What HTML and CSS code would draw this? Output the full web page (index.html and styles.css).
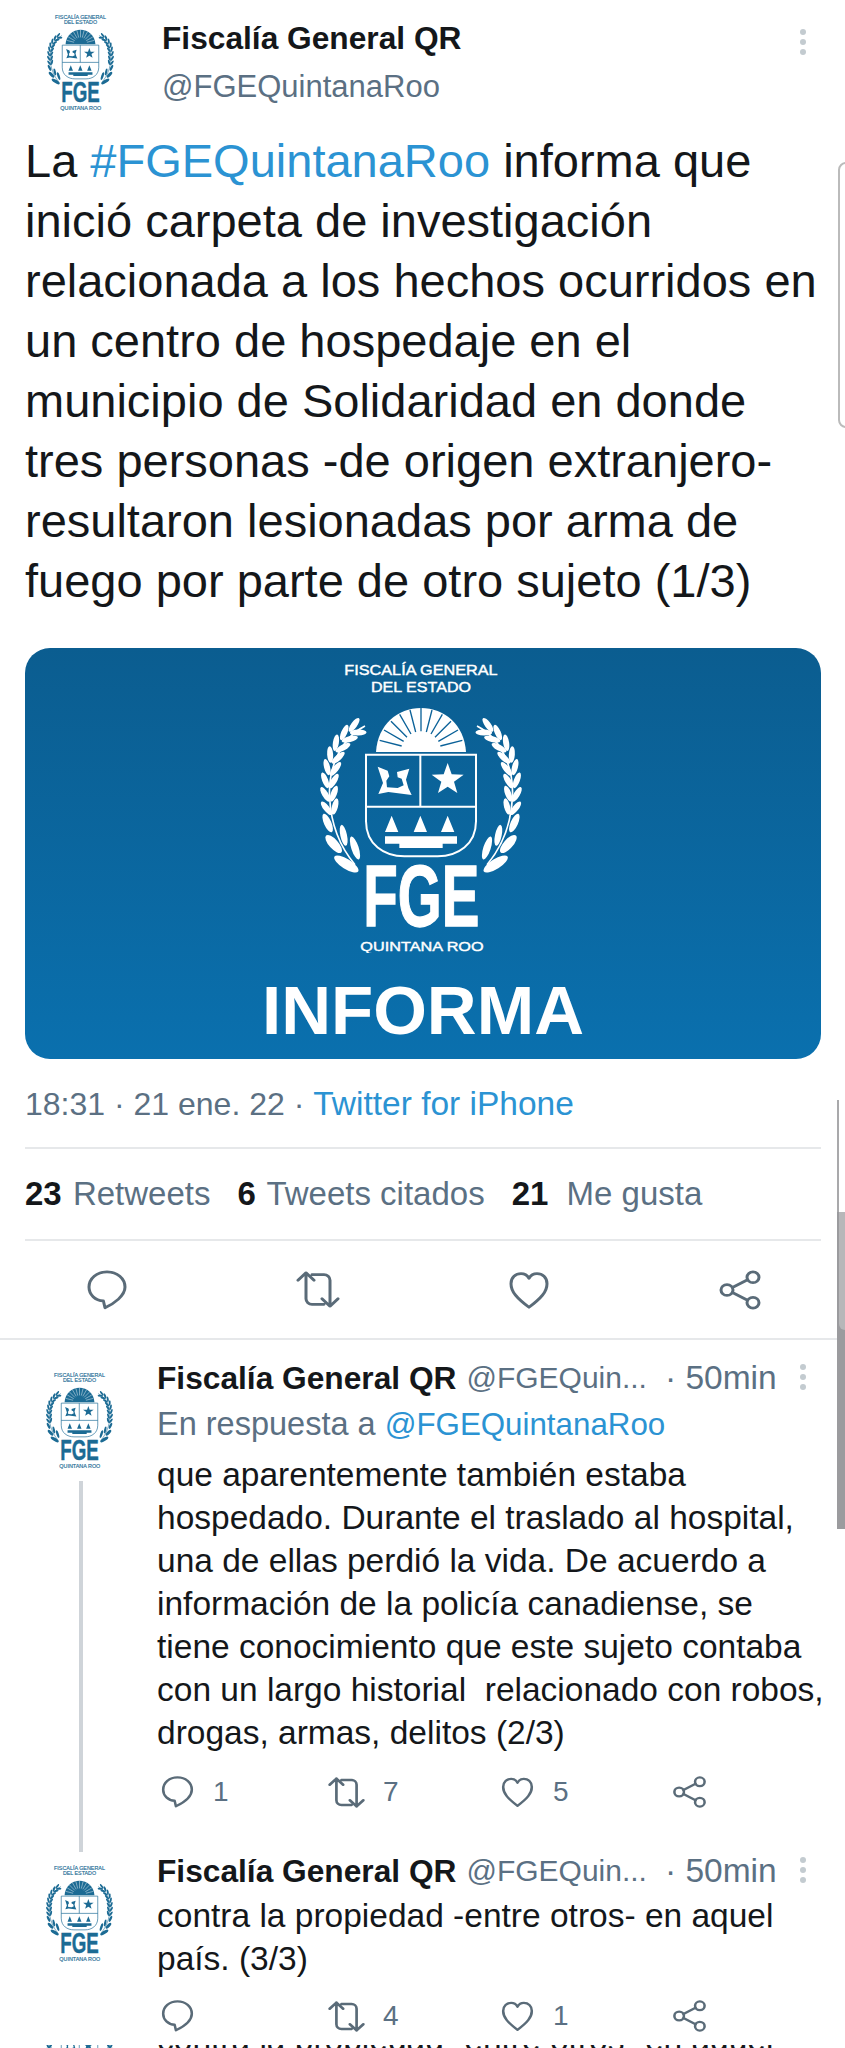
FILE: index.html
```html
<!DOCTYPE html>
<html lang="es">
<head>
<meta charset="UTF-8">
<meta name="viewport" content="width=device-width,initial-scale=1.0">
<title>Fiscalía General QR</title>
<link rel="stylesheet" href="styles.css">
</head>
<body>

<svg class="sprite" xmlns="http://www.w3.org/2000/svg">
  <symbol id="hoja" viewBox="-40 -40 80 80" overflow="visible">
    <ellipse cx="4" cy="-13" rx="25" ry="9" transform="rotate(-26 4 -13)"/>
    <ellipse cx="4" cy="13" rx="25" ry="9" transform="rotate(26 4 13)"/>
  </symbol>
  <g id="rama">
    <path class="tallo" d="M262 234C190 270 150 360 156 450C160 530 190 600 232 650"/>
    <use href="#hoja" x="-40" y="-40" width="80" height="80" transform="translate(232 244) rotate(-28)"/>
    <use href="#hoja" x="-40" y="-40" width="80" height="80" transform="translate(205 266) rotate(-40)"/>
    <use href="#hoja" x="-40" y="-40" width="80" height="80" transform="translate(183 295) rotate(-55)"/>
    <use href="#hoja" x="-40" y="-40" width="80" height="80" transform="translate(168 328) rotate(-68)"/>
    <use href="#hoja" x="-40" y="-40" width="80" height="80" transform="translate(160 364) rotate(-78)"/>
    <use href="#hoja" x="-40" y="-40" width="80" height="80" transform="translate(155 402) rotate(-85)"/>
    <use href="#hoja" x="-40" y="-40" width="80" height="80" transform="translate(156 442) rotate(-95)"/>
    <use href="#hoja" x="-40" y="-40" width="80" height="80" transform="translate(160 482) rotate(-102)"/>
    <ellipse cx="232" cy="600" rx="36" ry="11" transform="rotate(72 232 600)"/>
    <ellipse cx="198" cy="562" rx="32" ry="10" transform="rotate(78 198 562)"/>
    <ellipse cx="168" cy="588" rx="34" ry="14" transform="rotate(48 168 588)"/>
    <ellipse cx="206" cy="648" rx="42" ry="15" transform="rotate(32 206 648)"/>
    <ellipse cx="150" cy="525" rx="30" ry="11" transform="rotate(66 150 525)"/>
  </g>
  <symbol id="logo" viewBox="100 30 660 885">
    <text class="logo-txt" x="430" y="82" font-size="42" textLength="460" text-anchor="middle" lengthAdjust="spacingAndGlyphs">FISCALÍA GENERAL</text>
    <text class="logo-txt" x="430" y="133" font-size="42" textLength="300" text-anchor="middle" lengthAdjust="spacingAndGlyphs">DEL ESTADO</text>
    <use href="#rama"/>
    <use href="#rama" transform="translate(860 0) scale(-1 1)"/>
    <path d="M295 312C300 230 360 180 430 180S560 230 565 312Z"/>
    <path class="rayos" d="M488 294L554 277M482 280L541 246M472 268L520 220M460 258L494 199M446 252L463 186M430 250V180M414 252L397 186M400 258L366 199M388 268L340 220M378 280L319 246M372 294L306 277"/>
    <path class="escudo" d="M265 320H595V520C595 590 540 625 480 625H380C320 625 265 590 265 520ZM428 320V476M265 476H595"/>
    <path d="M300 356L330 368L335 385L326 398L328 418L360 420L378 412L372 392L360 388L358 372L395 362L385 395L392 420L402 441L332 432L302 438L316 405Z"/>
    <path d="M510 345L522 379L558 380L529 401L539 435L510 416L481 435L491 401L462 380L498 379Z"/>
    <path d="M342 503L322 552H362ZM428 503L408 552H448ZM510 503L490 552H530Z"/>
    <path d="M322 565H538V587H495V600H365V587H322Z"/>
    <text class="logo-fge" x="431" y="835" font-size="262" textLength="348" text-anchor="middle" lengthAdjust="spacingAndGlyphs">FGE</text>
    <text class="logo-txt" x="433" y="908" font-size="40" textLength="370" text-anchor="middle" lengthAdjust="spacingAndGlyphs">QUINTANA ROO</text>
  </symbol>
  <symbol id="i-comentar" viewBox="1 1 22 22" preserveAspectRatio="none">
    <path d="M12 2C6.9 2 3 5.6 3 10.4c0 4.2 3.1 7.4 7.2 7.6l.8 3.8c4.6-2.4 10-6.6 10-11.4C21 5.6 17.1 2 12 2z"/>
  </symbol>
  <symbol id="i-retweet" viewBox="1 2 22 20" preserveAspectRatio="none">
    <path d="M2 7l4-4 4 4M6 3v14a3 3 0 0 0 3 3h6M22 17l-4 4-4-4M18 21V7a3 3 0 0 0-3-3H9"/>
  </symbol>
  <symbol id="i-like" viewBox="1 1 22 22" preserveAspectRatio="none">
    <path d="M12 21.5C6 16.5 3 13 3 8.5 3 5 5.3 3 8 3c1.8 0 3.2 1 4 2.6C12.8 4 14.2 3 16 3c2.7 0 5 2 5 5.5 0 4.5-3 8-9 13z"/>
  </symbol>
  <symbol id="i-compartir" viewBox="1 1 22 22" preserveAspectRatio="none">
    <circle cx="18.5" cy="5" r="3"/><circle cx="18.5" cy="19" r="3"/><circle cx="5.5" cy="12" r="3"/>
    <path d="M8.2 10.6l7.6-4.2M8.2 13.4l7.6 4.2"/>
  </symbol>
</svg>

<div class="page">

  <header class="cabecera">
    <svg class="avatar"><use href="#logo"/></svg>
    <div class="autor">
      <div class="nombre">Fiscalía General QR</div>
      <div class="usuario">@FGEQuintanaRoo</div>
    </div>
    <div class="puntos"><span></span><span></span><span></span></div>
  </header>

  <p class="texto">La <a>#FGEQuintanaRoo</a> informa que<br>inició carpeta de investigación<br>relacionada a los hechos ocurridos en<br>un centro de hospedaje en el<br>municipio de Solidaridad en donde<br>tres personas -de origen extranjero-<br>resultaron lesionadas por arma de<br>fuego por parte de otro sujeto (1/3)</p>

  <div class="imagen">
    <svg class="logo-grande"><use href="#logo"/></svg>
    <div class="informa">INFORMA</div>
  </div>

  <div class="meta">18:31 · 21 ene. 22 · <a>Twitter for iPhone</a></div>

  <div class="stats">
    <span><b>23</b> Retweets</span>
    <span><b>6</b> Tweets citados</span>
    <span><b>21</b> Me gusta</span>
  </div>

  <div class="acciones">
    <svg class="ico"><use href="#i-comentar"/></svg>
    <svg class="ico ico-rt"><use href="#i-retweet"/></svg>
    <svg class="ico"><use href="#i-like"/></svg>
    <svg class="ico"><use href="#i-compartir"/></svg>
  </div>

  <article class="resp">
    <div class="lado">
      <svg class="avatar"><use href="#logo"/></svg>
      <div class="hilo"></div>
    </div>
    <div class="cuerpo">
      <div class="linea">
        <span class="nombre">Fiscalía General QR</span>
        <span class="usuario">@FGEQuin...</span>
        <span class="tiempo">· 50min</span>
        <div class="puntos"><span></span><span></span><span></span></div>
      </div>
      <div class="en-resp">En respuesta a <a>@FGEQuintanaRoo</a></div>
      <p class="texto-resp">que aparentemente también estaba<br>hospedado. Durante el traslado al hospital,<br>una de ellas perdió la vida. De acuerdo a<br>información de la policía canadiense, se<br>tiene conocimiento que este sujeto contaba<br>con un largo historial&nbsp; relacionado con robos,<br>drogas, armas, delitos (2/3)</p>
      <div class="botones">
        <span><svg class="ico-p"><use href="#i-comentar"/></svg>1</span>
        <span><svg class="ico-p ico-rt"><use href="#i-retweet"/></svg>7</span>
        <span><svg class="ico-p"><use href="#i-like"/></svg>5</span>
        <span><svg class="ico-p"><use href="#i-compartir"/></svg></span>
      </div>
    </div>
  </article>

  <article class="resp resp-ultima">
    <div class="lado">
      <svg class="avatar"><use href="#logo"/></svg>
    </div>
    <div class="cuerpo">
      <div class="linea">
        <span class="nombre">Fiscalía General QR</span>
        <span class="usuario">@FGEQuin...</span>
        <span class="tiempo">· 50min</span>
        <div class="puntos"><span></span><span></span><span></span></div>
      </div>
      <p class="texto-resp">contra la propiedad -entre otros- en aquel<br>país. (3/3)</p>
      <div class="botones">
        <span><svg class="ico-p"><use href="#i-comentar"/></svg></span>
        <span><svg class="ico-p ico-rt"><use href="#i-retweet"/></svg>4</span>
        <span><svg class="ico-p"><use href="#i-like"/></svg>1</span>
        <span><svg class="ico-p"><use href="#i-compartir"/></svg></span>
      </div>
    </div>
  </article>

  <div class="tira">
    <div class="lado"><svg class="avatar"><use href="#logo"/></svg></div>
    <p class="texto-resp">contra la propiedad -entre otros- en aquel</p>
  </div>

  <!-- restos de la barra lateral de la captura -->
  <div class="marco"></div>
  <div class="barra-linea"></div>
  <div class="barra"></div>
  <div class="barra-pulgar"></div>
</div>

</body>
</html>
```

FILE: styles.css
```css
* {
  box-sizing: border-box;
}

body {
  margin: 0;
  background: #fff;
  font-family: "Liberation Sans", Arial, sans-serif;
  color: #14171a;
}

a {
  color: #2b93d3;
}

.sprite {
  display: none;
}

.page {
  position: relative;
  height: 2048px;
  overflow: hidden;
}

/* logo */
.logo-txt {
  font-family: "Liberation Sans", sans-serif;
  stroke: currentColor;
  stroke-width: 1.2;
}
.logo-fge {
  font-family: "Liberation Sans", sans-serif;
  font-weight: 700;
  stroke: currentColor;
  stroke-width: 4;
}
.rayos {
  fill: none;
  stroke: var(--fondo);
  stroke-width: 4;
}
.escudo {
  fill: none;
  stroke: currentColor;
  stroke-width: 6;
}
.tallo {
  fill: none;
  stroke: currentColor;
  stroke-width: 5;
}
.avatar {
  display: block;
  flex: none;
  width: 73px;
  height: 98px;
  color: #1c6b94;
  fill: currentColor;
  --fondo: #fff;
}

/* cabecera */
.cabecera {
  display: flex;
  height: 130px;
  padding: 13px 0 0 44px;
}
.autor {
  margin: 5px 0 0 45px;
}
.nombre {
  font-size: 31.7px;
  font-weight: 700;
  line-height: 40px;
}
.usuario {
  font-size: 30px;
  line-height: 40px;
  color: #5b7083;
}
.autor .usuario {
  margin-top: 9px;
  font-size: 31px;
}
.puntos {
  display: flex;
  flex-direction: column;
  gap: 4px;
  position: absolute;
  right: 39px;
}
.puntos span {
  width: 6px;
  height: 6px;
  border-radius: 50%;
  background: #c3cbd0;
}
.cabecera .puntos {
  top: 29px;
}

.texto {
  margin: 0;
  padding: 1px 0 0 25px;
  font-size: 47px;
  line-height: 60px;
  white-space: nowrap;
}

.imagen {
  display: flex;
  flex-direction: column;
  align-items: center;
  width: 796px;
  height: 411px;
  margin: 37px 0 0 25px;
  padding-top: 10px;
  border-radius: 25px;
  background: linear-gradient(#0b5d90, #0a70ae);
  color: #fff;
}
.logo-grande {
  flex: none;
  width: 220px;
  height: 295px;
  margin-left: -4px;
  fill: #fff;
  color: #fff;
  --fondo: #0b6299;
}
.informa {
  margin-top: 20px;
  font-size: 69px;
  font-weight: 700;
  line-height: 76px;
}

.meta {
  margin: 25px 24px 0 25px;
  height: 65px;
  border-bottom: 2px solid #e6e8ea;
  font-size: 32px;
  line-height: 40px;
  color: #5b7083;
}
.meta a {
  font-size: 33.5px;
}

.stats {
  display: flex;
  gap: 27px;
  margin: 0 24px 0 25px;
  padding: 25px 0 26px;
  height: 92px;
  border-bottom: 2px solid #e6e8ea;
  font-size: 33px;
  line-height: 40px;
  color: #5b7083;
}
.stats b {
  color: #14171a;
  margin-right: 2px;
}
.stats span:last-child b {
  margin-right: 9px;
}

.acciones {
  display: grid;
  grid-template-columns: repeat(4, 211px);
  justify-items: center;
  align-items: center;
  height: 99px;
  padding-left: 1px;
  border-bottom: 2px solid #e6e8ea;
}
.ico {
  width: 44px;
  height: 40px;
  fill: none;
  stroke: #5a6b78;
  stroke-width: 1.5;
  stroke-linejoin: round;
  stroke-linecap: round;
}
.ico.ico-rt {
  width: 44px;
  height: 37px;
}

/* respuestas */
.resp {
  display: flex;
  padding: 18px 0 21px;
}
.resp-ultima {
  padding-bottom: 9px;
}
.lado {
  display: flex;
  flex-direction: column;
  align-items: center;
  flex: none;
  width: 157px;
  padding: 13px 0 0 5px;
  position: relative;
}
.lado .avatar {
  margin-left: -4px;
}
.hilo {
  position: absolute;
  top: 123px;
  bottom: -40px;
  left: 79px;
  width: 4px;
  background: #cfd4d9;
}
.linea {
  position: relative;
  display: flex;
  line-height: 40px;
}
.linea .usuario {
  margin-left: 10px;
}
.tiempo {
  margin-left: 18px;
  font-size: 33.5px;
  color: #5b7083;
}
.linea .puntos {
  top: 6px;
  left: 643px;
  right: auto;
}
.en-resp {
  margin-top: 6px;
  font-size: 32.5px;
  line-height: 40px;
  color: #5b7083;
}
.en-resp a {
  font-size: 31.3px;
}
.texto-resp {
  margin: 8px 0 0;
  font-size: 33.5px;
  line-height: 43px;
  white-space: nowrap;
}
.resp-ultima .texto-resp {
  margin-top: 3px;
}
.botones {
  display: grid;
  grid-template-columns: 168px 172px 172px auto;
  margin: 18px 0 0 3px;
  height: 40px;
  font-size: 28px;
  color: #5b7083;
}
.resp-ultima .botones {
  margin-top: 16px;
}
.botones span {
  display: flex;
  align-items: center;
  gap: 18px;
}
.ico-p {
  width: 35px;
  height: 32px;
  fill: none;
  stroke: #5a6b78;
  stroke-width: 1.6;
  stroke-linejoin: round;
  stroke-linecap: round;
}
.ico-p.ico-rt {
  width: 37px;
  height: 31px;
}

/* trozo de tweet cortado abajo */
.tira {
  display: flex;
  height: 3px;
  overflow: hidden;
}
.tira .lado {
  padding-top: 0;
}
.tira .avatar {
  margin-top: -40px;
}
.tira .texto-resp {
  margin-top: -8px;
  line-height: 5px;
}

/* barra lateral */
.marco {
  position: absolute;
  top: 162px;
  left: 838px;
  width: 10px;
  height: 266px;
  border: 2px solid #bbb;
  border-radius: 8px 0 0 8px;
}
.barra-linea {
  position: absolute;
  top: 1100px;
  left: 837px;
  width: 2px;
  height: 112px;
  background: #a9a9ab;
}
.barra {
  position: absolute;
  top: 1212px;
  left: 837px;
  width: 8px;
  height: 317px;
  background: #9b9b9e;
}
.barra-pulgar {
  position: absolute;
  top: 1212px;
  left: 839px;
  width: 6px;
  height: 118px;
  border-radius: 0 0 0 7px;
  background: #b7b7b9;
}
```
